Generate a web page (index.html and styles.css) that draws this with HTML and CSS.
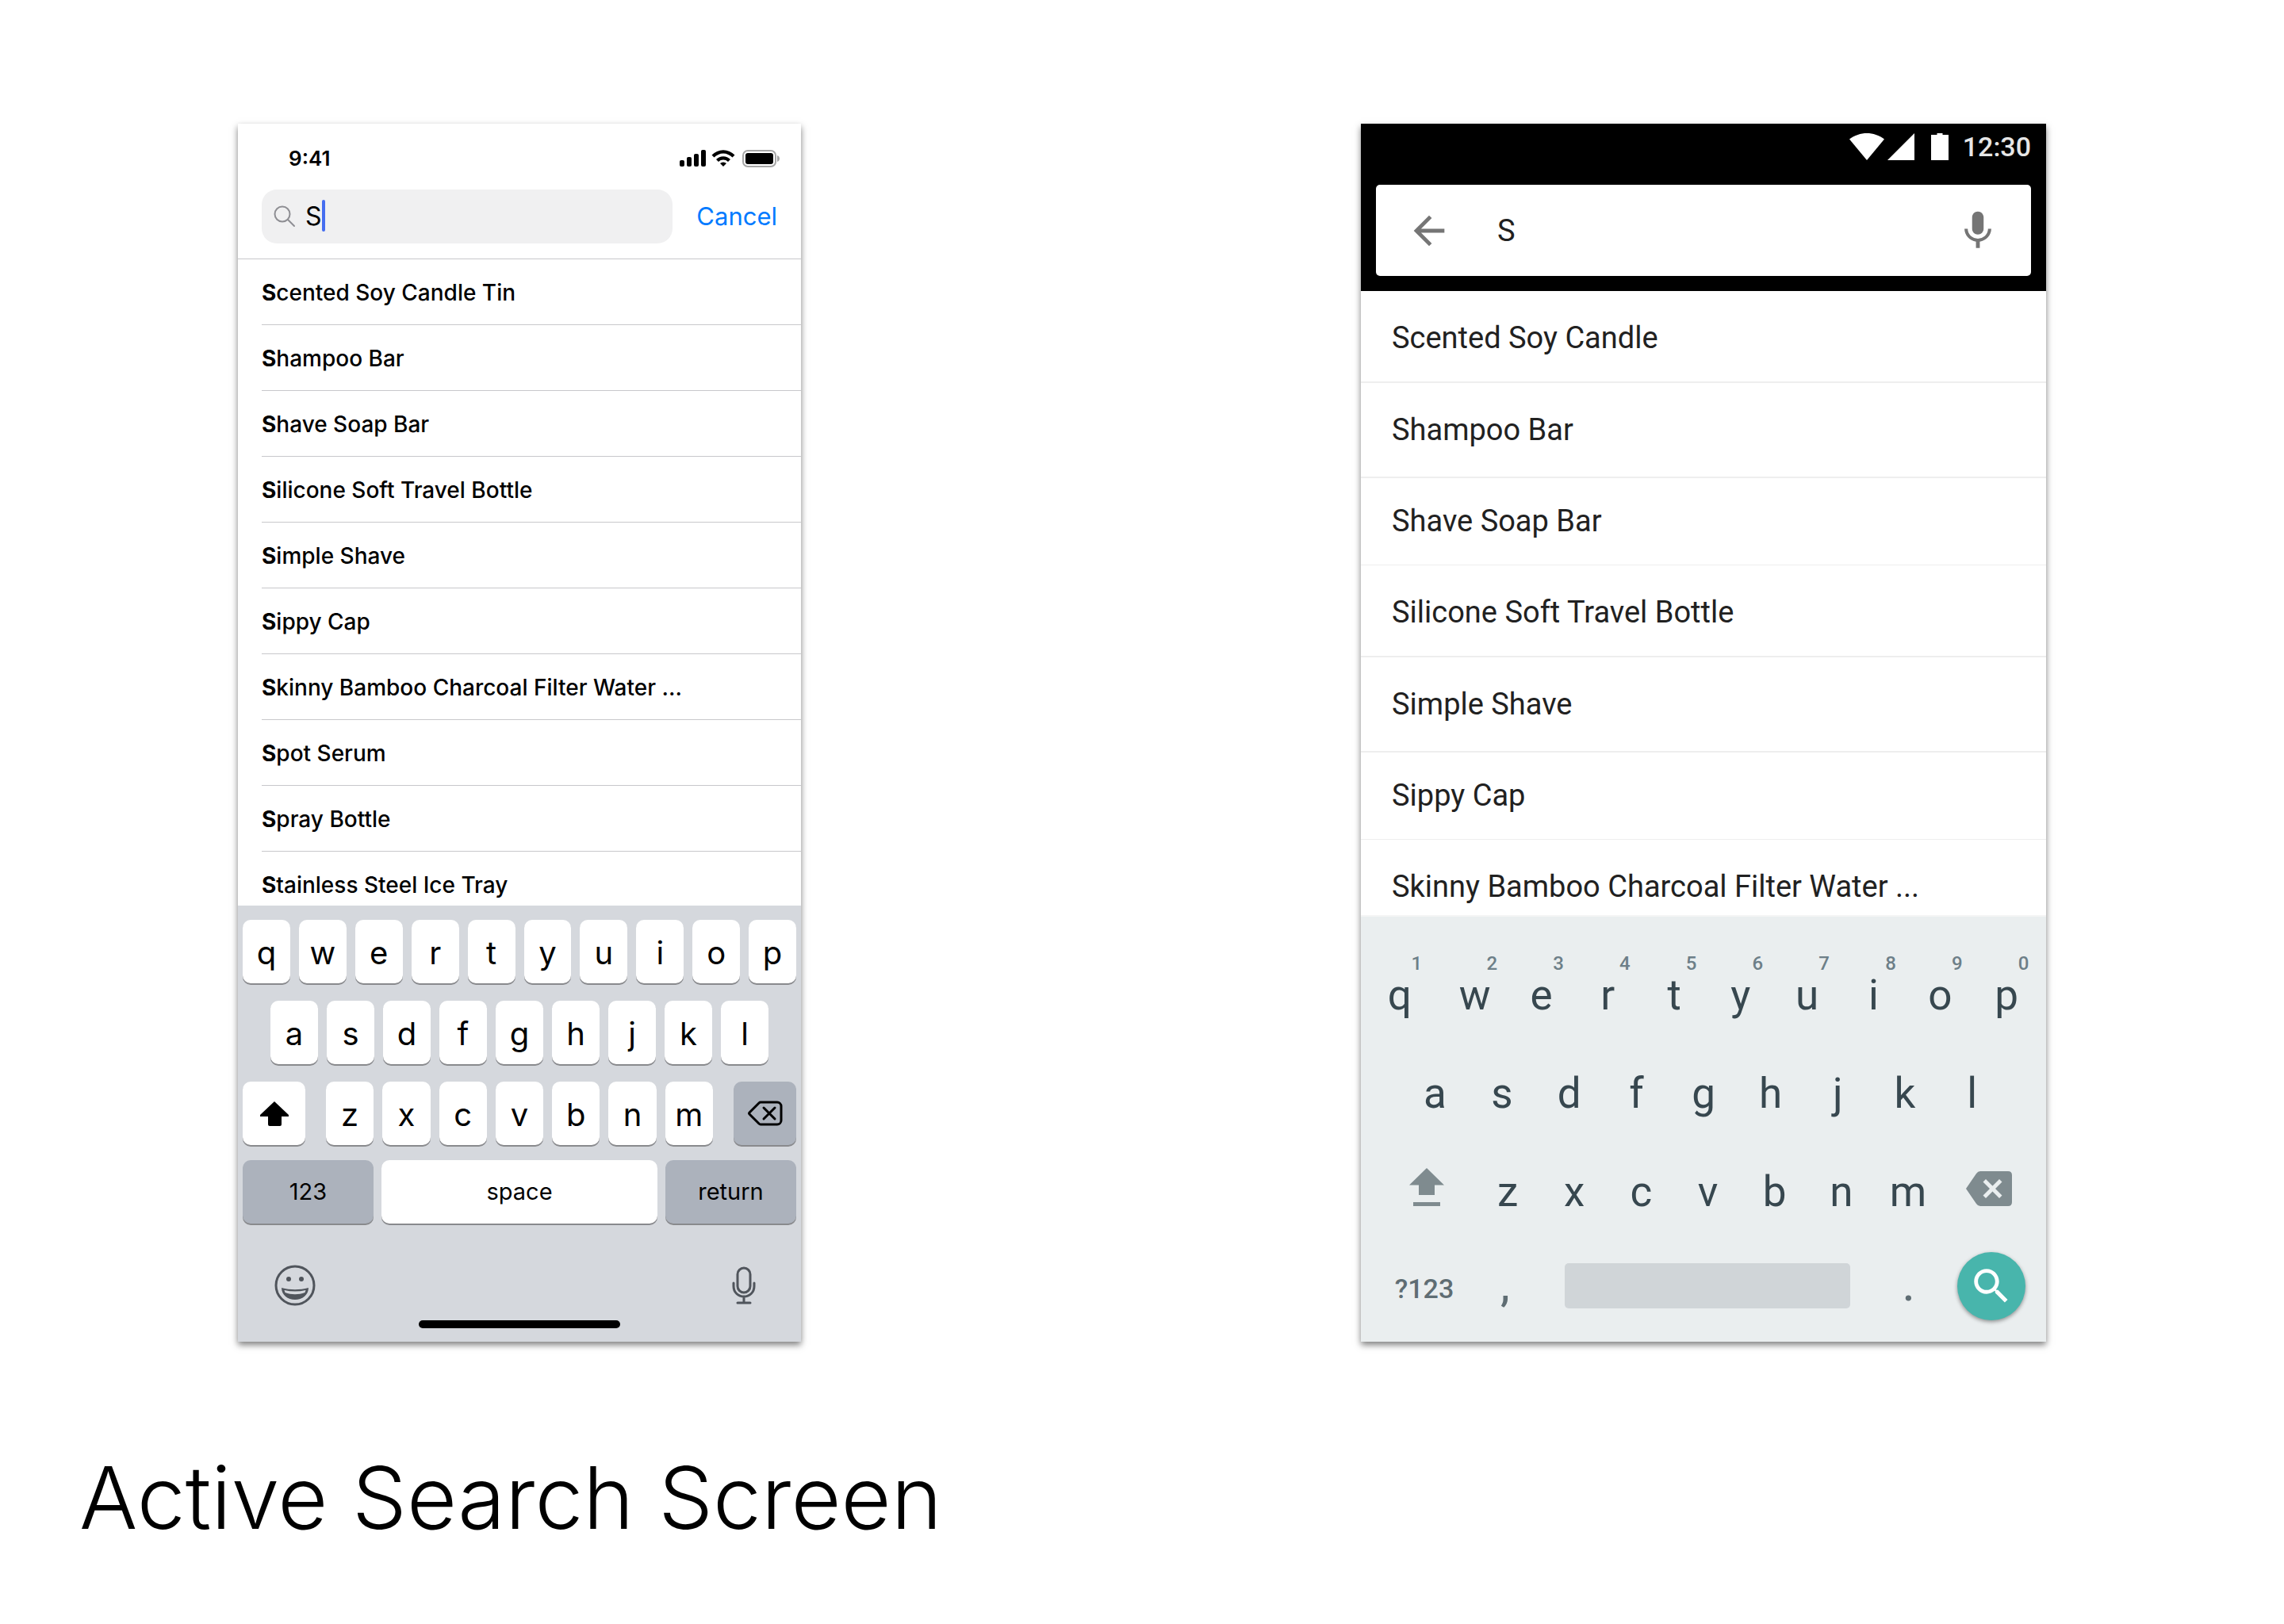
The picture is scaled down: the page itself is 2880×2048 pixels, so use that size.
FILE: index.html
```html
<!DOCTYPE html>
<html lang="en">
<head>
<meta charset="utf-8">
<meta name="viewport" content="width=device-width, initial-scale=1">
<title>Active Search Screen</title>
<link rel="stylesheet" href="styles.css">
</head>
<body>
<main class="board">
  <div class="phones">

    <section class="phone ios" aria-label="iOS search">
      <div class="ios-status">
        <span class="ios-time">9:41</span>
        <svg class="ios-signals" viewBox="0 0 126 22" width="126" height="22" aria-hidden="true">
          <rect x="0" y="13" width="6" height="8" rx="2"/>
          <rect x="9" y="9" width="6" height="12" rx="2"/>
          <rect x="18" y="5" width="6" height="16" rx="2"/>
          <rect x="27" y="0" width="6" height="21" rx="2"/>
          <path d="M40.500 6.500a20 20 0 0 1 29 0l-3 3a16 16 0 0 0-23 0z"/>
          <path d="M46 12a12.500 12.500 0 0 1 18 0l-3 3a8.500 8.500 0 0 0-12 0z"/>
          <path d="M51 17a6 6 0 0 1 8 0L55 21z"/>
          <rect x="80" y="1" width="41" height="20" rx="6" fill="none" stroke="#a6a6a6" stroke-width="2"/>
          <rect x="83" y="4" width="35" height="14" rx="3"/>
          <path d="M123 7c2.500 1 3 2.500 3 4s-.5 3-3 4z" fill="#a6a6a6"/>
        </svg>
      </div>
      <form class="ios-search">
        <div class="ios-field">
          <svg class="ios-glass" viewBox="0 0 28 28" width="28" height="28" aria-hidden="true"><circle cx="11" cy="11" r="9.500"/><path d="M18 18l8 8"/></svg>
          <input class="ios-input" type="text" value="S" aria-label="Search">
          <span class="ios-caret"></span>
        </div>
        <button class="ios-cancel" type="button">Cancel</button>
      </form>
      <ul class="ios-list">
        <li class="ios-item"><b>S</b>cented Soy Candle Tin</li>
        <li class="ios-item"><b>S</b>hampoo Bar</li>
        <li class="ios-item"><b>S</b>have Soap Bar</li>
        <li class="ios-item"><b>S</b>ilicone Soft Travel Bottle</li>
        <li class="ios-item"><b>S</b>imple Shave</li>
        <li class="ios-item"><b>S</b>ippy Cap</li>
        <li class="ios-item"><b>S</b>kinny Bamboo Charcoal Filter Water ...</li>
        <li class="ios-item"><b>S</b>pot Serum</li>
        <li class="ios-item"><b>S</b>pray Bottle</li>
        <li class="ios-item"><b>S</b>tainless Steel Ice Tray</li>
      </ul>
      <div class="ios-keyboard">
        <div class="ios-row">
          <button class="ios-key">q</button><button class="ios-key">w</button><button class="ios-key">e</button><button class="ios-key">r</button><button class="ios-key">t</button><button class="ios-key">y</button><button class="ios-key">u</button><button class="ios-key">i</button><button class="ios-key">o</button><button class="ios-key">p</button>
        </div>
        <div class="ios-row ios-row-home">
          <button class="ios-key">a</button><button class="ios-key">s</button><button class="ios-key">d</button><button class="ios-key">f</button><button class="ios-key">g</button><button class="ios-key">h</button><button class="ios-key">j</button><button class="ios-key">k</button><button class="ios-key">l</button>
        </div>
        <div class="ios-row ios-row-shift">
          <button class="ios-key ios-key-wide" aria-label="Shift"><svg viewBox="0 0 36 31" width="36" height="31" aria-hidden="true"><path d="M18 0L36 17v2h-9v10q0 2-2 2H12q-2 0-2-2V19H0v-2z"/></svg></button>
          <div class="ios-letters">
            <button class="ios-key">z</button><button class="ios-key">x</button><button class="ios-key">c</button><button class="ios-key">v</button><button class="ios-key">b</button><button class="ios-key">n</button><button class="ios-key">m</button>
          </div>
          <button class="ios-key ios-key-wide ios-key-dark" aria-label="Delete"><svg class="ios-line" viewBox="0 0 44 34" width="44" height="34" aria-hidden="true"><path d="M16 3h21a5 5 0 0 1 5 5v18a5 5 0 0 1-5 5H16q-1 0-2-1L2 18q-1-1 0-2L14 4q1-1 2-1zM20 10l14 14M34 10L20 24"/></svg></button>
        </div>
        <div class="ios-row ios-row-bottom">
          <button class="ios-key ios-key-mode ios-key-dark">123</button>
          <button class="ios-key ios-key-space">space</button>
          <button class="ios-key ios-key-mode ios-key-dark">return</button>
        </div>
        <div class="ios-tools">
          <button class="ios-tool" aria-label="Emoji"><svg viewBox="0 0 52 52" width="52" height="52" aria-hidden="true"><circle cx="26" cy="26" r="24" fill="none" stroke="#50555c" stroke-width="3"/><circle cx="18" cy="18" r="3"/><circle cx="34" cy="18" r="3"/><path d="M9 29c11 3 23 3 34 0c0 9-8 15-17 15S9 38 9 29z"/><path d="M12.500 32c9 2 18 2 27 0l-1 3c-8 3-17 3-25 0z" fill="#d5d8dd"/></svg></button>
          <button class="ios-tool" aria-label="Dictate"><svg viewBox="0 0 30 48" width="30" height="48" aria-hidden="true"><g fill="none" stroke="#50555c" stroke-width="3" stroke-linecap="round"><rect x="7" y="2" width="16" height="31" rx="8"/><path d="M2 21v4c0 8 6 13 13 13s13-5 13-13v-4M15 38v8M7 46h16"/></g></svg></button>
        </div>
        <div class="ios-home"></div>
      </div>
    </section>

    <section class="phone android" aria-label="Android search">
      <header class="and-header">
        <div class="and-status">
          <svg viewBox="0 0 126 34" width="126" height="34" aria-hidden="true"><path d="M22 34L0 7.500C13-2.500 31-2.500 44 7.500z"/><path d="M82 0v34H48z"/><path d="M103 2h7.500V0h7v2h7.500v32h-22z"/></svg>
          <span class="and-time">12:30</span>
        </div>
        <form class="and-search">
          <button class="and-icon" type="button" aria-label="Back"><svg viewBox="0 0 24 24" width="58" height="58" aria-hidden="true"><path d="M20 11H7.830l5.590-5.590L12 4l-8 8 8 8 1.410-1.410L7.830 13H20v-2z"/></svg></button>
          <input class="and-input" type="text" value="S" aria-label="Search">
          <button class="and-icon" type="button" aria-label="Voice search"><svg viewBox="0 0 24 24" width="58" height="58" aria-hidden="true"><path d="M12 14c1.660 0 2.990-1.340 2.990-3L15 5c0-1.660-1.340-3-3-3S9 3.340 9 5v6c0 1.660 1.340 3 3 3zm5.300-3c0 3-2.540 5.100-5.300 5.100S6.700 14 6.700 11H5c0 3.410 2.720 6.230 6 6.720V21h2v-3.280c3.280-.48 6-3.300 6-6.720h-1.700z"/></svg></button>
        </form>
      </header>
      <ul class="and-list">
        <li class="and-item">Scented Soy Candle</li>
        <li class="and-item and-item-tall">Shampoo Bar</li>
        <li class="and-item and-item-short">Shave Soap Bar</li>
        <li class="and-item">Silicone Soft Travel Bottle</li>
        <li class="and-item and-item-tall">Simple Shave</li>
        <li class="and-item and-item-short">Sippy Cap</li>
        <li class="and-item">Skinny Bamboo Charcoal Filter Water ...</li>
      </ul>
      <div class="and-keyboard">
        <div class="and-row and-row-top">
          <button class="and-key"><small>1</small>q</button><button class="and-key"><small>2</small>w</button><button class="and-key"><small>3</small>e</button><button class="and-key"><small>4</small>r</button><button class="and-key"><small>5</small>t</button><button class="and-key"><small>6</small>y</button><button class="and-key"><small>7</small>u</button><button class="and-key"><small>8</small>i</button><button class="and-key"><small>9</small>o</button><button class="and-key"><small>0</small>p</button>
        </div>
        <div class="and-row and-row-home">
          <button class="and-key">a</button><button class="and-key">s</button><button class="and-key">d</button><button class="and-key">f</button><button class="and-key">g</button><button class="and-key">h</button><button class="and-key">j</button><button class="and-key">k</button><button class="and-key">l</button>
        </div>
        <div class="and-row and-row-shift">
          <button class="and-key and-key-side" aria-label="Shift"><svg viewBox="0 0 44 48" width="44" height="48" aria-hidden="true"><path d="M22 0L44 21.500H32V34H12V21.500H0zM5 43h34v5H5z"/></svg></button>
          <button class="and-key">z</button><button class="and-key">x</button><button class="and-key">c</button><button class="and-key">v</button><button class="and-key">b</button><button class="and-key">n</button><button class="and-key">m</button>
          <button class="and-key and-key-side" aria-label="Delete"><svg viewBox="0 0 58 44" width="58" height="44" aria-hidden="true"><path fill-rule="evenodd" d="M18 0h35q5 0 5 5v34q0 5-5 5H18q-3 0-5-3L0 22 13 3q2-3 5-3zM25 10l-3.500 3.500L30 22l-8.500 8.500L25 34l8.500-8.500L42 34l3.500-3.500L37 22l8.500-8.500L42 10l-8.500 8.500z"/></svg></button>
        </div>
        <div class="and-row and-row-bottom">
          <button class="and-key and-key-mode">?123</button>
          <button class="and-key and-key-comma">,</button>
          <button class="and-space" aria-label="Space"></button>
          <button class="and-key and-key-period">.</button>
          <button class="and-fab" aria-label="Search"><svg viewBox="0 0 24 24" width="58" height="58" aria-hidden="true"><path d="M15.500 14h-.79l-.28-.27C15.410 12.590 16 11.110 16 9.500 16 5.910 13.090 3 9.500 3S3 5.910 3 9.500 5.910 16 9.500 16c1.610 0 3.090-.59 4.230-1.570l.27.28v.79l5 4.990L20.490 19l-4.990-5zm-6 0C7.010 14 5 11.990 5 9.500S7.010 5 9.500 5 14 7.010 14 9.500 11.990 14 9.500 14z"/></svg></button>
        </div>
      </div>
    </section>

  </div>
  <h1 class="title">Active Search Screen</h1>
</main>
</body>
</html>
```

FILE: styles.css
```css
* {
  box-sizing: border-box;
}

body {
  margin: 0;
  background: #fff;
  color: #000;
  font-family: Inter, "Liberation Sans", sans-serif;
}

button,
input {
  margin: 0;
  padding: 0;
  border: 0;
  background: none;
  color: inherit;
  font: inherit;
}

input {
  min-width: 0;
  outline: none;
}

svg {
  display: block;
  flex: none;
}

ul {
  margin: 0;
  padding: 0;
  list-style: none;
}

.board {
  padding: 156px 100px 0;
}

.phones {
  display: flex;
  justify-content: space-between;
  padding: 0 200px;
}

.phone {
  display: flex;
  flex-direction: column;
  min-width: 0;
  background: #fff;
  box-shadow: 0 4px 8px rgba(0, 0, 0, 0.5);
}

.title {
  margin: 124px 0 0;
  font-size: 109px;
  font-weight: 300;
  line-height: 144px;
}

/* iOS */

.ios {
  flex: 0 1 710px;
}

.ios-status {
  display: flex;
  align-items: center;
  justify-content: space-between;
  height: 83px;
  padding: 4px 27px 0 64px;
}

.ios-time {
  font-size: 26px;
  font-weight: 600;
  line-height: 32px;
}

.ios-search {
  display: flex;
  align-items: center;
  gap: 30px;
  padding: 0 30px 19px;
  border-bottom: 1px solid #c8c8cb;
}

.ios-field {
  position: relative;
  display: flex;
  flex: 1;
  align-items: center;
  gap: 12px;
  height: 68px;
  min-width: 0;
  padding: 0 15px;
  border-radius: 19px;
  background: #f0f0f1;
}

.ios-glass {
  fill: none;
  stroke: #8e8e93;
  stroke-width: 2;
  stroke-linecap: round;
}

.ios-input {
  flex: 1;
  font-size: 32px;
  line-height: 40px;
}

.ios-caret {
  position: absolute;
  left: 76px;
  top: 13px;
  width: 4px;
  height: 40px;
  border-radius: 2px;
  background: #456df0;
}

.ios-cancel {
  color: #007aff;
  font-size: 31px;
  line-height: 40px;
}

.ios-list {
  height: 815px;
  padding-left: 30px;
  overflow: hidden;
}

.ios-item {
  height: 83px;
  border-bottom: 1px solid #c8c8cb;
  font-size: 28px;
  font-weight: 500;
  line-height: 84px;
  white-space: nowrap;
}

.ios-item b {
  font-weight: 700;
}

.ios-keyboard {
  padding: 18px 6px 17px;
  background: #d5d8dd;
}

.ios-row,
.ios-letters {
  display: flex;
  gap: 11px;
}

.ios-row {
  margin-bottom: 22px;
}

.ios-row-home {
  padding: 0 35px;
}

.ios-row-shift {
  gap: 26px;
  margin-bottom: 19px;
}

.ios-row-bottom {
  gap: 10px;
  margin-bottom: 0;
}

.ios-letters {
  flex: 1;
}

.ios-key {
  display: flex;
  flex: 1 1 0;
  align-items: center;
  justify-content: center;
  height: 80px;
  padding-top: 3px;
  border-radius: 10px;
  background: #fff;
  box-shadow: 0 2px 0 #898a8d;
  font-size: 40px;
  line-height: 48px;
}

.ios-key-wide {
  flex: 0 0 79px;
  padding: 0;
}

.ios-key-dark {
  background: #acb2bc;
}

.ios-key-mode,
.ios-key-space {
  padding: 0;
  font-size: 29px;
}

.ios-key-mode {
  flex: 0 0 165px;
}

.ios-line {
  fill: none;
  stroke: #000;
  stroke-width: 3;
  stroke-linecap: round;
  stroke-linejoin: round;
}

.ios-tools {
  display: flex;
  align-items: center;
  justify-content: space-between;
  margin-top: 52px;
  padding: 0 51px 0 40px;
}

.ios-tool {
  fill: #50555c;
}

.ios-home {
  width: 254px;
  height: 10px;
  margin: 18px auto 0;
  border-radius: 5px;
  background: #000;
}

/* Android */

.android {
  flex: 0 1 864px;
  font-family: Roboto, "Liberation Sans", sans-serif;
}

.and-header {
  padding: 0 19px 19px;
  background: #000;
}

.and-status {
  display: flex;
  align-items: center;
  justify-content: flex-end;
  gap: 17px;
  height: 58px;
  margin-bottom: 19px;
  fill: #fff;
}

.and-time {
  color: #e6e6e6;
  font-size: 34px;
  font-weight: 500;
  line-height: 40px;
}

.and-search {
  display: flex;
  align-items: center;
  gap: 57px;
  height: 115px;
  padding: 0 38px;
  border-radius: 5px;
  background: #fff;
}

.and-icon {
  fill: #757575;
}

.and-input {
  flex: 1;
  color: #212121;
  font-size: 38px;
  line-height: 48px;
}

.and-list {
  height: 789px;
  border-bottom: 2px solid #f5f5f5;
  overflow: hidden;
}

.and-item {
  padding: 35px 39px 31px;
  border-bottom: 2px solid #eee;
  color: #212121;
  font-size: 38px;
  line-height: 48px;
  white-space: nowrap;
}

.and-item-tall {
  padding-bottom: 35px;
}

.and-item-short {
  padding-top: 30px;
  padding-bottom: 31px;
  border-bottom-width: 1px;
}

.and-keyboard {
  padding-top: 34px;
  background: #eaeeef;
}

.and-row {
  display: flex;
  height: 124px;
}

.and-row-top {
  height: 123px;
  padding: 0 8px 0 7px;
}

.and-row-top .and-key:first-child {
  margin-right: 11px;
}

.and-row-home {
  padding: 0 51px;
}

.and-row-shift {
  padding: 0 12px 0 23px;
}

.and-row-bottom {
  align-items: center;
  height: 121px;
  margin-bottom: 10px;
}

.and-key {
  display: flex;
  flex: 1 1 0;
  flex-direction: column;
  align-items: center;
  justify-content: flex-end;
  padding-bottom: 28px;
  color: #37474f;
  font-size: 53px;
  line-height: 60px;
}

.and-key small {
  padding-left: 43px;
  color: #6d7f88;
  font-size: 24px;
  font-weight: 500;
  line-height: 20px;
}

.and-key-side {
  flex: 0 0 120px;
  padding-bottom: 40px;
  fill: #7f8b8f;
}

.and-key-mode,
.and-key-comma,
.and-key-period {
  padding: 0;
  color: #5f6d73;
  font-weight: 500;
}

.and-key-mode {
  flex: 0 0 160px;
  padding-top: 6px;
  font-size: 34px;
}

.and-key-comma {
  flex: 0 0 97px;
  padding-right: 53px;
}

.and-key-period {
  padding-left: 12px;
}

.and-space {
  flex: 0 0 360px;
  height: 57px;
  border-radius: 5px;
  background: #d0d5d8;
}

.and-fab {
  display: flex;
  flex: none;
  align-items: center;
  justify-content: center;
  width: 86px;
  height: 86px;
  margin-right: 26px;
  border-radius: 50%;
  background: #48b5ac;
  box-shadow: 0 2px 5px rgba(0, 0, 0, 0.4);
  fill: #fff;
}
```
